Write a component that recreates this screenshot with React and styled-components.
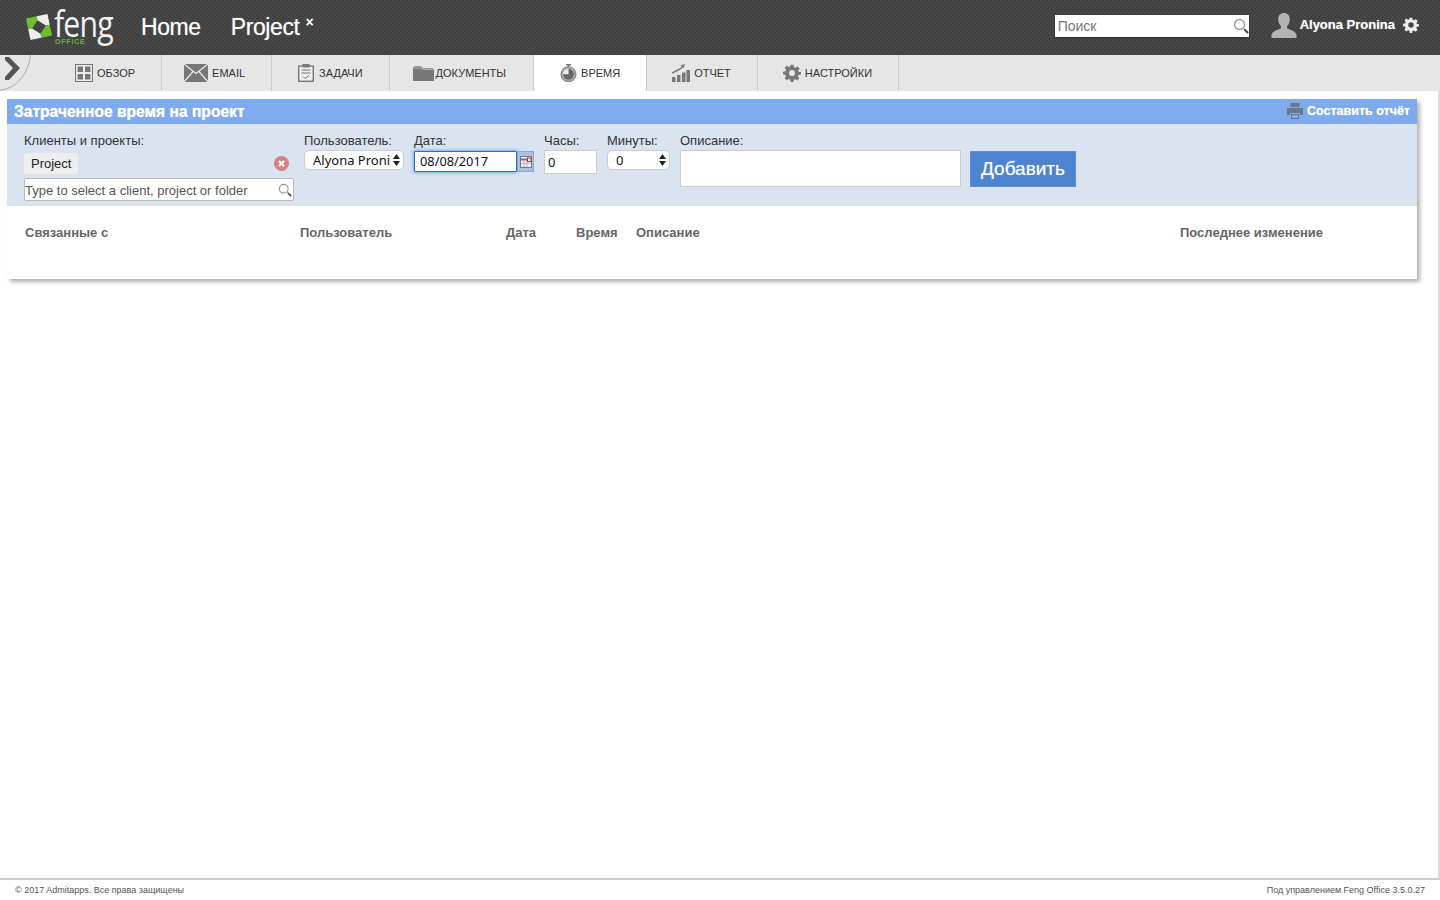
import styled, { createGlobalStyle } from 'styled-components';

const GlobalStyle = createGlobalStyle`
  html, body {
    margin: 0;
    padding: 0;
    height: 100%;
    background: #fff;
    font-family: "Liberation Sans", Arial, sans-serif;
  }
  #root {
    height: 100%;
  }
`;

const Page = styled.div`
  height: 900px;
  display: flex;
  flex-direction: column;
  overflow: hidden;
`;

const Header = styled.header`
  height: 55px;
  flex: none;
  display: flex;
  align-items: center;
  background-color: #444;
  background-image: repeating-conic-gradient(#404040 0 25%, #484848 0 50%);
  background-size: 4px 4px;
`;

const Logo = styled.div`
  display: flex;
  width: 117px;
  margin-left: 24px;
  position: relative;
  height: 44px;
`;

const LogoMark = styled.svg`
  flex: none;
  margin: 6px 0 0 1px;
`;

const LogoWord = styled.span`
  font-family: "Open Sans", sans-serif;
  font-weight: 500;
  font-size: 36px;
  line-height: 26px;
  letter-spacing: -1px;
  color: #f2f2f2;
  margin: 5px 0 0 -1px;
  transform: scaleX(0.84);
  transform-origin: left;
`;

const LogoSub = styled.span`
  position: absolute;
  left: 31px;
  top: 32px;
  font-size: 7px;
  line-height: 8px;
  font-weight: bold;
  letter-spacing: 0.8px;
  color: #6db33f;
`;

const HeaderLink = styled.a`
  font-size: 23px;
  color: #fff;
  letter-spacing: -0.4px;
  text-shadow: 0 0 1px rgba(255, 255, 255, 0.5);
  margin-right: ${({ $gap }) => $gap}px;
`;

const CloseMark = styled.span`
  font-size: 14px;
  font-weight: bold;
  color: #fff;
  position: relative;
  top: -6px;
  margin-left: 6px;
`;

const HeaderRight = styled.div`
  margin-left: auto;
  display: flex;
  align-items: center;
`;

const SearchBox = styled.div`
  width: 194px;
  height: 22px;
  box-sizing: border-box;
  background: #fff;
  display: flex;
  align-items: center;
  padding: 0 0 0 3px;
  margin-right: 22px;
  margin-top: -4px;
  box-shadow: 0 1px 2px rgba(0, 0, 0, 0.4);
`;

const SearchInput = styled.input`
  flex: 1;
  min-width: 0;
  border: 0;
  padding: 0;
  outline: none;
  font-family: inherit;
  font-size: 14px;
  background: transparent;
  &::placeholder {
    color: #777;
    opacity: 1;
  }
`;

const Person = styled.svg`
  flex: none;
  margin-top: -5px;
`;

const UserName = styled.span`
  color: #fff;
  font-size: 13px;
  font-weight: bold;
  text-shadow: 0 0 1px rgba(255, 255, 255, 0.5);
  margin: 0 8px 0 3px;
  position: relative;
  top: -3px;
`;

const UserGear = styled.span`
  display: flex;
  margin-right: 21px;
  margin-top: -5px;
`;

const TabBar = styled.nav`
  height: 36px;
  flex: none;
  display: flex;
  background: #e6e6e6;
`;

const Toggle = styled.div`
  width: 49px;
  flex: none;
`;

const Tab = styled.a`
  display: flex;
  align-items: center;
  gap: ${({ $gap }) => $gap}px;
  padding: 0 ${({ $right }) => $right || 26}px 0 ${({ $left }) => $left}px;
  border-right: 1px solid #ccc;
  font-size: 11px;
  color: #333;
  background: ${({ $active }) => ($active ? '#fff' : 'transparent')};
`;

const Content = styled.main`
  flex: 1;
  padding: 8px 21px 0 7px;
  border-right: 2px solid #ddd;
  min-height: 0;
`;

const Panel = styled.section`
  height: 180px;
  background: #fff;
  box-shadow: 3px 3px 4px rgba(0, 0, 0, 0.3);
`;

const PanelTitle = styled.div`
  height: 25px;
  background: #7eaaee;
  display: flex;
  align-items: center;
  justify-content: space-between;
  padding: 0 7px;
`;

const TitleText = styled.h1`
  margin: 0;
  font-size: 15.6px;
  font-weight: bold;
  color: #fff;
  text-shadow: 0 0 1px rgba(255, 255, 255, 0.8);
`;

const ReportLink = styled.a`
  display: flex;
  align-items: center;
  gap: 4px;
  font-size: 12.5px;
  font-weight: bold;
  color: #fff;
  text-shadow: 0 0 1px rgba(255, 255, 255, 0.6);
  margin-top: -1px;
`;

const Form = styled.div`
  height: 82px;
  background: #dae3f0;
  display: flex;
  padding: 9px 0 0 17px;
  box-sizing: border-box;
`;

const Field = styled.div`
  width: ${({ $width }) => $width}px;
  flex: none;
  margin-right: ${({ $gap }) => $gap ?? 10}px;
`;

const Label = styled.label`
  display: block;
  font-size: 13px;
  line-height: 15px;
  color: #333;
  margin-bottom: ${({ $gap }) => $gap ?? 2}px;
`;

const ChipRow = styled.div`
  display: flex;
  align-items: center;
  justify-content: space-between;
  padding-right: 5px;
  height: 21px;
  margin-bottom: 4px;
`;

const Chip = styled.span`
  background: #eee;
  border-radius: 2px;
  padding: 3px 7px;
  font-size: 13px;
  line-height: 15px;
  color: #222;
`;

const ClientSearch = styled.div`
  height: 21px;
  background: #fff;
  border: 1px solid #bbb;
  border-radius: 2px;
  display: flex;
  align-items: center;
  padding-right: 1px;
`;

const ClientInput = styled.input`
  flex: 1;
  min-width: 0;
  border: 0;
  outline: none;
  padding: 2px 0 0;
  font-family: inherit;
  font-size: 13px;
  background: transparent;
  &::placeholder {
    color: #555;
    opacity: 1;
  }
`;

const SelectWrap = styled.div`
  position: relative;
  height: 20px;
`;

const Select = styled.select`
  appearance: none;
  width: 100%;
  height: 20px;
  background: #fff;
  border: 1px solid #ccc;
  border-radius: 5px;
  padding: 0 0 1px ${({ $pad }) => $pad}px;
  font-family: "Noto Sans", sans-serif;
  font-size: 13px;
  color: #111;
  outline: none;
`;

const Arrows = styled.svg`
  position: absolute;
  right: 4px;
  top: 4px;
  pointer-events: none;
`;

const DateRow = styled.div`
  display: flex;
`;

const DateInput = styled.input`
  width: 103px;
  height: 21px;
  box-sizing: border-box;
  border: 1px solid #2f6fc0;
  box-shadow: 0 0 3px 1px #7eaaee;
  outline: none;
  border-radius: 1px;
  padding: 0 0 1px 5px;
  font-family: "Noto Sans", sans-serif;
  font-size: 12.8px;
  color: #111;
`;

const CalendarBtn = styled.span`
  width: 17px;
  height: 21px;
  background: #a9c0e2;
  border: 1px solid #8fa9cf;
  box-sizing: border-box;
  display: flex;
  align-items: center;
  justify-content: center;
`;

const PlainInput = styled.input`
  display: block;
  width: 100%;
  height: ${({ $height }) => $height}px;
  box-sizing: border-box;
  border: 1px solid #ccc;
  outline: none;
  background: #fff;
  padding: 0 0 0 3px;
  font-family: "Noto Sans", sans-serif;
  font-size: 13px;
  color: #111;
`;

const AddButton = styled.button`
  width: 106px;
  height: 36px;
  margin-top: 18px;
  border: 1px solid #5c8fd6;
  background: #4d83cf;
  color: #fff;
  font-family: inherit;
  font-size: 19px;
  text-shadow: 0 0 1px rgba(255, 255, 255, 0.6);
  padding: 0;
`;

const TableHead = styled.div`
  display: grid;
  grid-template-columns: 275px 206px 70px 60px 544px 1fr;
  padding: 19px 0 0 18px;
`;

const HeadCell = styled.span`
  font-size: 13px;
  line-height: 15px;
  font-weight: bold;
  color: #666;
`;

const Footer = styled.footer`
  flex: none;
  height: 22px;
  box-sizing: border-box;
  border-top: 2px solid #ccc;
  display: flex;
  justify-content: space-between;
  padding: 4px 15px 0;
  font-size: 9px;
  line-height: 12px;
  color: #555;
`;

const MagnifierIcon = ({ size = 16 }) => (
  <svg width={size} height={size} viewBox="0 0 16 16">
    <circle cx="6.5" cy="6.5" r="5" fill="#fff" stroke="#999" strokeWidth="1.3" />
    <path d="M10.5 10.5l1.5 1.5" stroke="#999" strokeWidth="1.2" />
    <path d="M12 12l2.5 2.5" stroke="#444" strokeWidth="2" strokeLinecap="round" />
  </svg>
);

const GearIcon = ({ size = 18, color = '#777' }) => (
  <svg width={size} height={size} viewBox="0 0 24 24" fill={color}>
    <path
      fillRule="evenodd"
      d="M10 1h4l.6 3.2 2 .8L19.3 3.2l2.8 2.8-1.8 2.7.8 2L24 10.5V14l-3.2.6-.8 2 1.8 2.7-2.8 2.8-2.7-1.8-2 .8L13.7 24h-3.5l-.6-3.2-2-.8-2.7 1.8-2.8-2.8 1.8-2.7-.8-2L0 13.7v-3.5l3.2-.6.8-2L2.2 5 5 2.2l2.7 1.8 2-.8L10 1zM12 8a4 4 0 1 0 0 8 4 4 0 0 0 0-8z"
    />
  </svg>
);

const FengMark = () => (
  <LogoMark width="30" height="30" viewBox="0 0 30 30">
    <g transform="rotate(-12 14 15)">
      <path d="M3 4h11v4l-7 7H3z" fill="#6fbe2e" />
      <path d="M14 4h11v11h-4l-7-7z" fill="#eee" />
      <path d="M25 15v11H14v-4l7-7z" fill="#6fbe2e" />
      <path d="M14 26H3V15h4l7 7z" fill="#eee" />
    </g>
  </LogoMark>
);

const OverviewIcon = () => (
  <svg width="18" height="18" viewBox="0 0 18 18">
    <rect x="0.5" y="0.5" width="17" height="17" fill="#eee" stroke="#777" />
    <path d="M2.5 2.5H8V8H2.5zM10 2.5h5.5V8H10zM2.5 10H8v5.5H2.5zM10 10h5.5v5.500H10z" fill="#777" />
  </svg>
);

const MailIcon = () => (
  <svg width="24" height="18" viewBox="0 0 24 18">
    <rect width="24" height="18" fill="#777" />
    <path d="M0 0l12 9.5L24 0M0 18l9-10.5M24 18l-9-10.5" fill="none" stroke="#eee" strokeWidth="1.2" />
  </svg>
);

const TaskIcon = () => (
  <svg width="16" height="18" viewBox="0 0 16 18">
    <rect x="0.7" y="2" width="14.6" height="15.3" fill="#eee" stroke="#777" strokeWidth="1.4" />
    <rect x="4.5" y="0" width="7" height="3.5" fill="#777" />
    <path d="M3.5 6h9M3.5 9h9" stroke="#777" />
    <path d="M5 12.5l2 2 4-3" fill="none" stroke="#777" />
  </svg>
);

const FolderIcon = () => (
  <svg width="21" height="16" viewBox="0 0 21 16">
    <path d="M0 2.5V16h21V4.5H9.5L8 2.5z" fill="#777" />
    <path d="M1 1h7l1.500 2H20v1H1z" fill="#999" />
  </svg>
);

const ClockIcon = () => (
  <svg width="17" height="18" viewBox="0 0 17 18">
    <path d="M6 0h5v1.5H9.2v2H7.8v-2H6z" fill="#777" />
    <circle cx="8.5" cy="10.3" r="7.5" fill="#aaa" stroke="#777" />
    <circle cx="8.5" cy="10.3" r="5.5" fill="#eee" />
    <path d="M8.5 10.3V4.8a5.5 5.5 0 1 1-5.5 5.5z" fill="#666" />
  </svg>
);

const ChartIcon = () => (
  <svg width="18" height="18" viewBox="0 0 18 18">
    <path d="M0 13h3.5v5H0zM5 11h3.5v7H5zM10 8.5h3.5V18H10zM14.5 6H18v12h-3.5z" fill="#777" />
    <path d="M0 9l7-3.5 3.5-2.5" fill="none" stroke="#777" strokeWidth="1.5" />
    <path d="M8.5 1.2L13 0l-1.3 4.2z" fill="#777" />
  </svg>
);

const PrinterIcon = () => (
  <svg width="16" height="16" viewBox="0 0 16 16">
    <path d="M3.5 0h9v4h-9zM0 5h16v7h-3v-2H3v2H0z" fill="#6d7889" />
    <path d="M4 11h8v5H4z" fill="#6d7889" />
    <path d="M5 12h6v3H5z" fill="#7eaaee" />
  </svg>
);

const PersonIcon = () => (
  <Person width="26" height="25" viewBox="0 0 26 26">
    <path
      d="M13 0c3.8 0 6 2.7 6 6.5 0 3-1 5.5-2.800 7.200v2.200c1.500 1.200 9.800 3 9.800 7.100V26H0v-3c0-4.100 8.300-5.900 9.800-7.100v-2.200C8 12 7 9.500 7 6.500 7 2.700 9.200 0 13 0z"
      fill="#b3b3b3"
    />
  </Person>
);

const SpinArrows = () => (
  <Arrows width="7" height="12" viewBox="0 0 7 12">
    <path d="M3.5 0L7 5H0zM3.5 12L0 7h7z" fill="#222" />
  </Arrows>
);

const tabs = [
  { label: 'ОБЗОР', Icon: OverviewIcon, left: 26, gap: 4 },
  { label: 'EMAIL', Icon: MailIcon, left: 22, gap: 4 },
  { label: 'ЗАДАЧИ', Icon: TaskIcon, left: 26, gap: 5 },
  { label: 'ДОКУМЕНТЫ', Icon: FolderIcon, left: 23, gap: 2, right: 27 },
  { label: 'ВРЕМЯ', Icon: ClockIcon, left: 26, gap: 4, active: true },
  { label: 'ОТЧЕТ', Icon: ChartIcon, left: 25, gap: 4 },
  { label: 'НАСТРОЙКИ', Icon: () => <GearIcon />, left: 25, gap: 4 },
];

const columns = ['Связанные с', 'Пользователь', 'Дата', 'Время', 'Описание', 'Последнее изменение'];

const App = () => (
  <>
    <GlobalStyle />
    <Page>
      <Header>
        <Logo>
          <FengMark />
          <LogoWord>feng</LogoWord>
          <LogoSub>OFFICE</LogoSub>
        </Logo>
        <HeaderLink $gap={30}>Home</HeaderLink>
        <HeaderLink $gap={0}>Project</HeaderLink>
        <CloseMark>×</CloseMark>
        <HeaderRight>
          <SearchBox>
            <SearchInput placeholder="Поиск" />
            <MagnifierIcon />
          </SearchBox>
          <PersonIcon />
          <UserName>Alyona Pronina</UserName>
          <UserGear>
            <GearIcon size={16} color="#eee" />
          </UserGear>
        </HeaderRight>
      </Header>

      <TabBar>
        <Toggle>
          <svg width="32" height="36" viewBox="0 0 32 36">
            <path d="M30.5 0C29 17 17 34 0 35" fill="none" stroke="#aaa" />
            <path d="M5 2h4l11 11-11 12H5v-3l8-9-8-8z" fill="#555" />
          </svg>
        </Toggle>
        {tabs.map(({ label, Icon, left, gap, right, active }) => (
          <Tab key={label} $left={left} $gap={gap} $right={right} $active={active}>
            <Icon />
            {label}
          </Tab>
        ))}
      </TabBar>

      <Content>
        <Panel>
          <PanelTitle>
            <TitleText>Затраченное время на проект</TitleText>
            <ReportLink>
              <PrinterIcon />
              Составить отчёт
            </ReportLink>
          </PanelTitle>

          <Form>
            <Field $width={270}>
              <Label $gap={5}>Клиенты и проекты:</Label>
              <ChipRow>
                <Chip>Project</Chip>
                <svg width="15" height="15" viewBox="0 0 15 15">
                  <circle cx="7.5" cy="7.5" r="7.5" fill="#d98080" />
                  <path d="M5 5l5 5M10 5l-5 5" stroke="#fff" strokeWidth="2.2" />
                </svg>
              </ChipRow>
              <ClientSearch>
                <ClientInput placeholder="Type to select a client, project or folder" />
                <MagnifierIcon size={14} />
              </ClientSearch>
            </Field>
            <Field $width={100}>
              <Label>Пользователь:</Label>
              <SelectWrap>
                <Select $pad={8} defaultValue="a">
                  <option value="a">Alyona Proni</option>
                </Select>
                <SpinArrows />
              </SelectWrap>
            </Field>
            <Field $width={120}>
              <Label $gap={3}>Дата:</Label>
              <DateRow>
                <DateInput defaultValue="08/08/2017" />
                <CalendarBtn>
                  <svg width="12" height="12" viewBox="0 0 12 12">
                    <rect x="0.5" y="0.5" width="11" height="11" fill="#eee" stroke="#778" />
                    <path d="M1 3.5h10" stroke="#778" strokeWidth="2" />
                    <path d="M4 5v6M7 5v6M1 7.5h10" stroke="#bbb" />
                    <rect x="7.5" y="2" width="3.5" height="3.5" fill="#fff" stroke="#a33" />
                  </svg>
                </CalendarBtn>
              </DateRow>
            </Field>
            <Field $width={53}>
              <Label>Часы:</Label>
              <PlainInput $height={24} defaultValue="0" />
            </Field>
            <Field $width={63}>
              <Label>Минуты:</Label>
              <SelectWrap>
                <Select $pad={8} defaultValue="0">
                  <option value="0">0</option>
                </Select>
                <SpinArrows />
              </SelectWrap>
            </Field>
            <Field $width={281} $gap={9}>
              <Label>Описание:</Label>
              <PlainInput $height={37} />
            </Field>
            <AddButton>Добавить</AddButton>
          </Form>

          <TableHead>
            {columns.map((col) => (
              <HeadCell key={col}>{col}</HeadCell>
            ))}
          </TableHead>
        </Panel>
      </Content>

      <Footer>
        <span>© 2017 Admitapps. Все права защищены</span>
        <span>Под управлением Feng Office 3.5.0.27</span>
      </Footer>
    </Page>
  </>
);

export default App;
